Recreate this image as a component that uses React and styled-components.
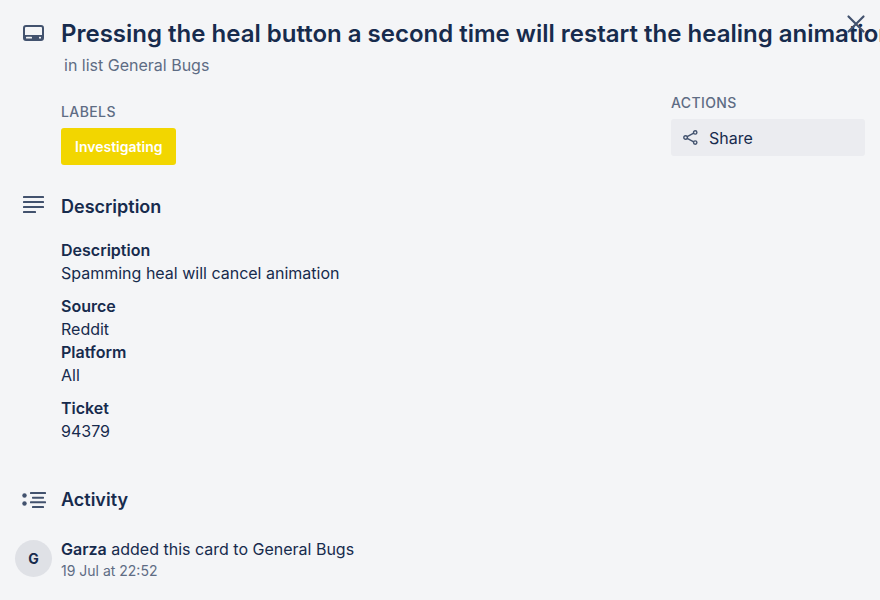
import styled, { createGlobalStyle } from "styled-components";

const GlobalStyle = createGlobalStyle`
  html, body {
    margin: 0;
    padding: 0;
    background: #f4f5f7;
    height: 100%;
  }
  body {
    font-family: "Inter", "Liberation Sans", sans-serif;
    color: #172b4d;
    overflow: hidden;
  }
`;

const Page = styled.div`
  position: relative;
  width: 880px;
  height: 600px;
  padding: 19px 15px 0 15px;
  box-sizing: border-box;
  overflow: hidden;
`;

const CloseButton = styled.button`
  position: absolute;
  top: 11px;
  right: 11px;
  width: 26px;
  height: 26px;
  padding: 0;
  border: none;
  background: none;
  color: #42526e;
`;

const Header = styled.header`
  display: flex;
  align-items: flex-start;
`;

const IconSlot = styled.div`
  width: 46px;
  flex-shrink: 0;
  display: flex;
  justify-content: ${(props) => props.$justify || "flex-start"};
  padding-left: ${(props) => props.$left || 7}px;
  padding-top: ${(props) => props.$top || 0}px;
  box-sizing: border-box;
  color: #42526e;
`;

const TitleBlock = styled.div`
  display: flex;
  flex-direction: column;
`;

const Title = styled.h1`
  margin: 0;
  font-size: 24px;
  line-height: 30px;
  font-weight: 600;
  white-space: nowrap;
`;

const ListName = styled.div`
  margin: 6px 0 0 3px;
  font-size: 16px;
  line-height: 20px;
  color: #5e6c84;
`;

const Columns = styled.div`
  display: flex;
  justify-content: space-between;
`;

const MainColumn = styled.main`
  display: flex;
  flex-direction: column;
`;

const LabelsBlock = styled.div`
  margin: 27px 0 0 46px;
`;

const SmallHeading = styled.h3`
  margin: 0;
  font-size: 14px;
  line-height: 20px;
  font-weight: 500;
  letter-spacing: 0.4px;
  color: #5e6c84;
`;

const LabelChip = styled.span`
  display: inline-block;
  margin-top: 6px;
  padding: 0 14px;
  height: 37px;
  line-height: 37px;
  border-radius: 3px;
  background: #f2d600;
  color: #fff;
  font-size: 14px;
  font-weight: 600;
`;

const SectionHeader = styled.div`
  display: flex;
  align-items: flex-start;
  margin-top: ${(props) => props.$top}px;
`;

const SectionTitle = styled.h2`
  margin: 0;
  font-size: 18px;
  line-height: 24px;
  font-weight: 600;
`;

const Description = styled.div`
  margin: 20px 0 0 46px;
  font-size: 16px;
  line-height: 23px;
`;

const Para = styled.p`
  margin: 0 0 ${(props) => props.$gap ?? 10}px 0;
`;

const Strong = styled.strong`
  font-weight: 600;
`;

const ActivityRow = styled.div`
  display: flex;
  margin-top: 26px;
`;

const Avatar = styled.div`
  width: 37px;
  height: 37px;
  margin-top: 2px;
  margin-right: 9px;
  border-radius: 50%;
  background: #dfe1e6;
  display: flex;
  align-items: center;
  justify-content: center;
  font-size: 14px;
  font-weight: 700;
  flex-shrink: 0;
`;

const ActivityText = styled.div`
  font-size: 16px;
  line-height: 23px;
`;

const Timestamp = styled.div`
  font-size: 14px;
  line-height: 20px;
  color: #5e6c84;
`;

const Sidebar = styled.aside`
  width: 194px;
  margin-top: 18px;
`;

const ShareButton = styled.button`
  display: flex;
  align-items: center;
  gap: 11px;
  width: 100%;
  height: 37px;
  margin-top: 6px;
  padding: 0 0 0 12px;
  border: none;
  border-radius: 3px;
  background: #ebecf0;
  color: #172b4d;
  font-family: inherit;
  font-size: 16px;
  text-align: left;
`;

function CardIcon() {
  return (
    <svg width="21" height="16" viewBox="0 0 21 16" fill="currentColor">
      <path
        fillRule="evenodd"
        d="M3 0h15a3 3 0 0 1 3 3v10a3 3 0 0 1-3 3H3a3 3 0 0 1-3-3V3a3 3 0 0 1 3-3zm0 2a1 1 0 0 0-1 1v7h17V3a1 1 0 0 0-1-1H3z"
      />
      <rect x="3" y="11.8" width="6" height="1.8" rx="0.6" fill="#f4f5f7" />
      <rect x="16" y="11.8" width="2" height="1.8" rx="0.6" fill="#f4f5f7" />
    </svg>
  );
}

function LinesIcon() {
  return (
    <svg width="21" height="17" viewBox="0 0 21 17" fill="currentColor">
      <rect y="0" width="21" height="2" rx="0.6" />
      <rect y="5" width="21" height="2" rx="0.6" />
      <rect y="10" width="21" height="2" rx="0.6" />
      <rect y="15" width="13" height="2" rx="0.6" />
    </svg>
  );
}

function ActivityIcon() {
  return (
    <svg width="24" height="16" viewBox="0 0 24 16" fill="currentColor">
      <circle cx="2.5" cy="3.5" r="2.2" />
      <circle cx="2.5" cy="11.5" r="2.2" />
      <rect x="8" y="0" width="16" height="2" rx="0.6" />
      <rect x="10" y="4.7" width="12" height="2" rx="0.6" />
      <rect x="8" y="9.3" width="16" height="2" rx="0.6" />
      <rect x="10" y="14" width="12" height="2" rx="0.6" />
    </svg>
  );
}

function ShareIcon() {
  return (
    <svg
      width="15"
      height="15"
      viewBox="0 0 15 15"
      fill="none"
      stroke="#42526e"
      strokeWidth="1.4"
    >
      <circle cx="2.6" cy="7.5" r="1.8" />
      <circle cx="12.2" cy="2.4" r="1.7" />
      <circle cx="12.2" cy="12.6" r="1.7" />
      <path d="M4.2 6.6l6.5-3.4M4.2 8.4l6.5 3.4" />
    </svg>
  );
}

export default function App() {
  return (
    <>
      <GlobalStyle />
      <Page>
        <CloseButton aria-label="Close">
          <svg width="26" height="26" viewBox="0 0 26 26" stroke="currentColor" strokeWidth="2.2" strokeLinecap="round">
            <path d="M5.5 5.5l15 15M20.5 5.5l-15 15" />
          </svg>
        </CloseButton>
        <Header>
          <IconSlot $left={8} $top={6}>
            <CardIcon />
          </IconSlot>
          <TitleBlock>
            <Title>Pressing the heal button a second time will restart the healing animation</Title>
            <ListName>in list General Bugs</ListName>
          </TitleBlock>
        </Header>
        <Columns>
          <MainColumn>
            <LabelsBlock>
              <SmallHeading>LABELS</SmallHeading>
              <LabelChip>Investigating</LabelChip>
            </LabelsBlock>
            <SectionHeader $top={30}>
              <IconSlot $left={8} $top={1}>
                <LinesIcon />
              </IconSlot>
              <SectionTitle>Description</SectionTitle>
            </SectionHeader>
            <Description>
              <Para>
                <Strong>Description</Strong>
                <br />
                Spamming heal will cancel animation
              </Para>
              <Para $gap={0}>
                <Strong>Source</Strong>
                <br />
                Reddit
              </Para>
              <Para>
                <Strong>Platform</Strong>
                <br />
                All
              </Para>
              <Para>
                <Strong>Ticket</Strong>
                <br />
                94379
              </Para>
            </Description>
            <SectionHeader $top={35}>
              <IconSlot $left={7} $top={4}>
                <ActivityIcon />
              </IconSlot>
              <SectionTitle>Activity</SectionTitle>
            </SectionHeader>
            <ActivityRow>
              <Avatar>G</Avatar>
              <div>
                <ActivityText>
                  <Strong>Garza</Strong> added this card to General Bugs
                </ActivityText>
                <Timestamp>19 Jul at 22:52</Timestamp>
              </div>
            </ActivityRow>
          </MainColumn>
          <Sidebar>
            <SmallHeading>ACTIONS</SmallHeading>
            <ShareButton>
              <ShareIcon />
              Share
            </ShareButton>
          </Sidebar>
        </Columns>
      </Page>
    </>
  );
}
